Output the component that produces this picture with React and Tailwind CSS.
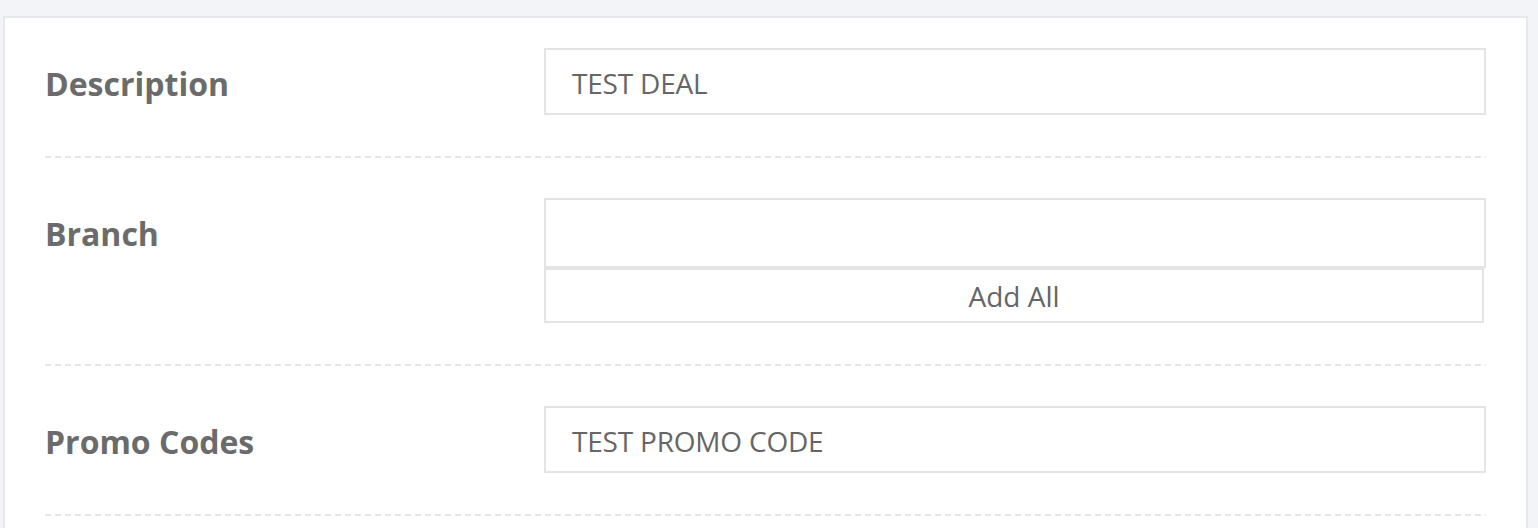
import React from 'react';

// --- Ligne pointillée ---
const Dashed = () => (
  <div className="h-[2px] w-full bg-[linear-gradient(to_right,#e4e6ea_6px,transparent_6px)] bg-[length:10px_2px]" />
);

const Field = ({ value }) => (
  <div className="h-[67px] border-2 border-[#e4e4e4] bg-white flex items-center px-[26px] pt-[2px] text-[28px] text-[#666] tracking-[-0.2px]">
    {value}
  </div>
);

const Row = ({ label, first, children }) => (
  <div className={`flex pb-[41px] ${first ? 'pt-[30px]' : 'pt-[40px]'}`}>
    <div className="w-[499px] shrink-0 pt-[14px] text-[32px] font-bold text-[#6b6b6b] leading-[44px]">{label}</div>
    <div className="flex-1">{children}</div>
  </div>
);

const App = () => {
  return (
    <div className="min-h-screen bg-[#f3f4f8] pt-[16px] pl-[3px] pr-[10px] font-['Open_Sans',sans-serif]">
      <div className="bg-white border-2 border-[#e6e8ec] border-b-0 px-[40px] h-[512px] overflow-hidden">
        <Row label="Description" first>
          <Field value="TEST DEAL" />
        </Row>
        <Dashed />
        <Row label="Branch">
          <div className="h-[70px] border-2 border-[#e4e4e4] bg-white" />
          <button className="w-[940px] h-[55px] border-2 border-[#e4e4e4] bg-white text-[28px] text-[#666] flex items-center justify-center">
            Add All
          </button>
        </Row>
        <Dashed />
        <Row label="Promo Codes">
          <Field value="TEST PROMO CODE" />
        </Row>
        <Dashed />
      </div>
    </div>
  );
};

export default App;
